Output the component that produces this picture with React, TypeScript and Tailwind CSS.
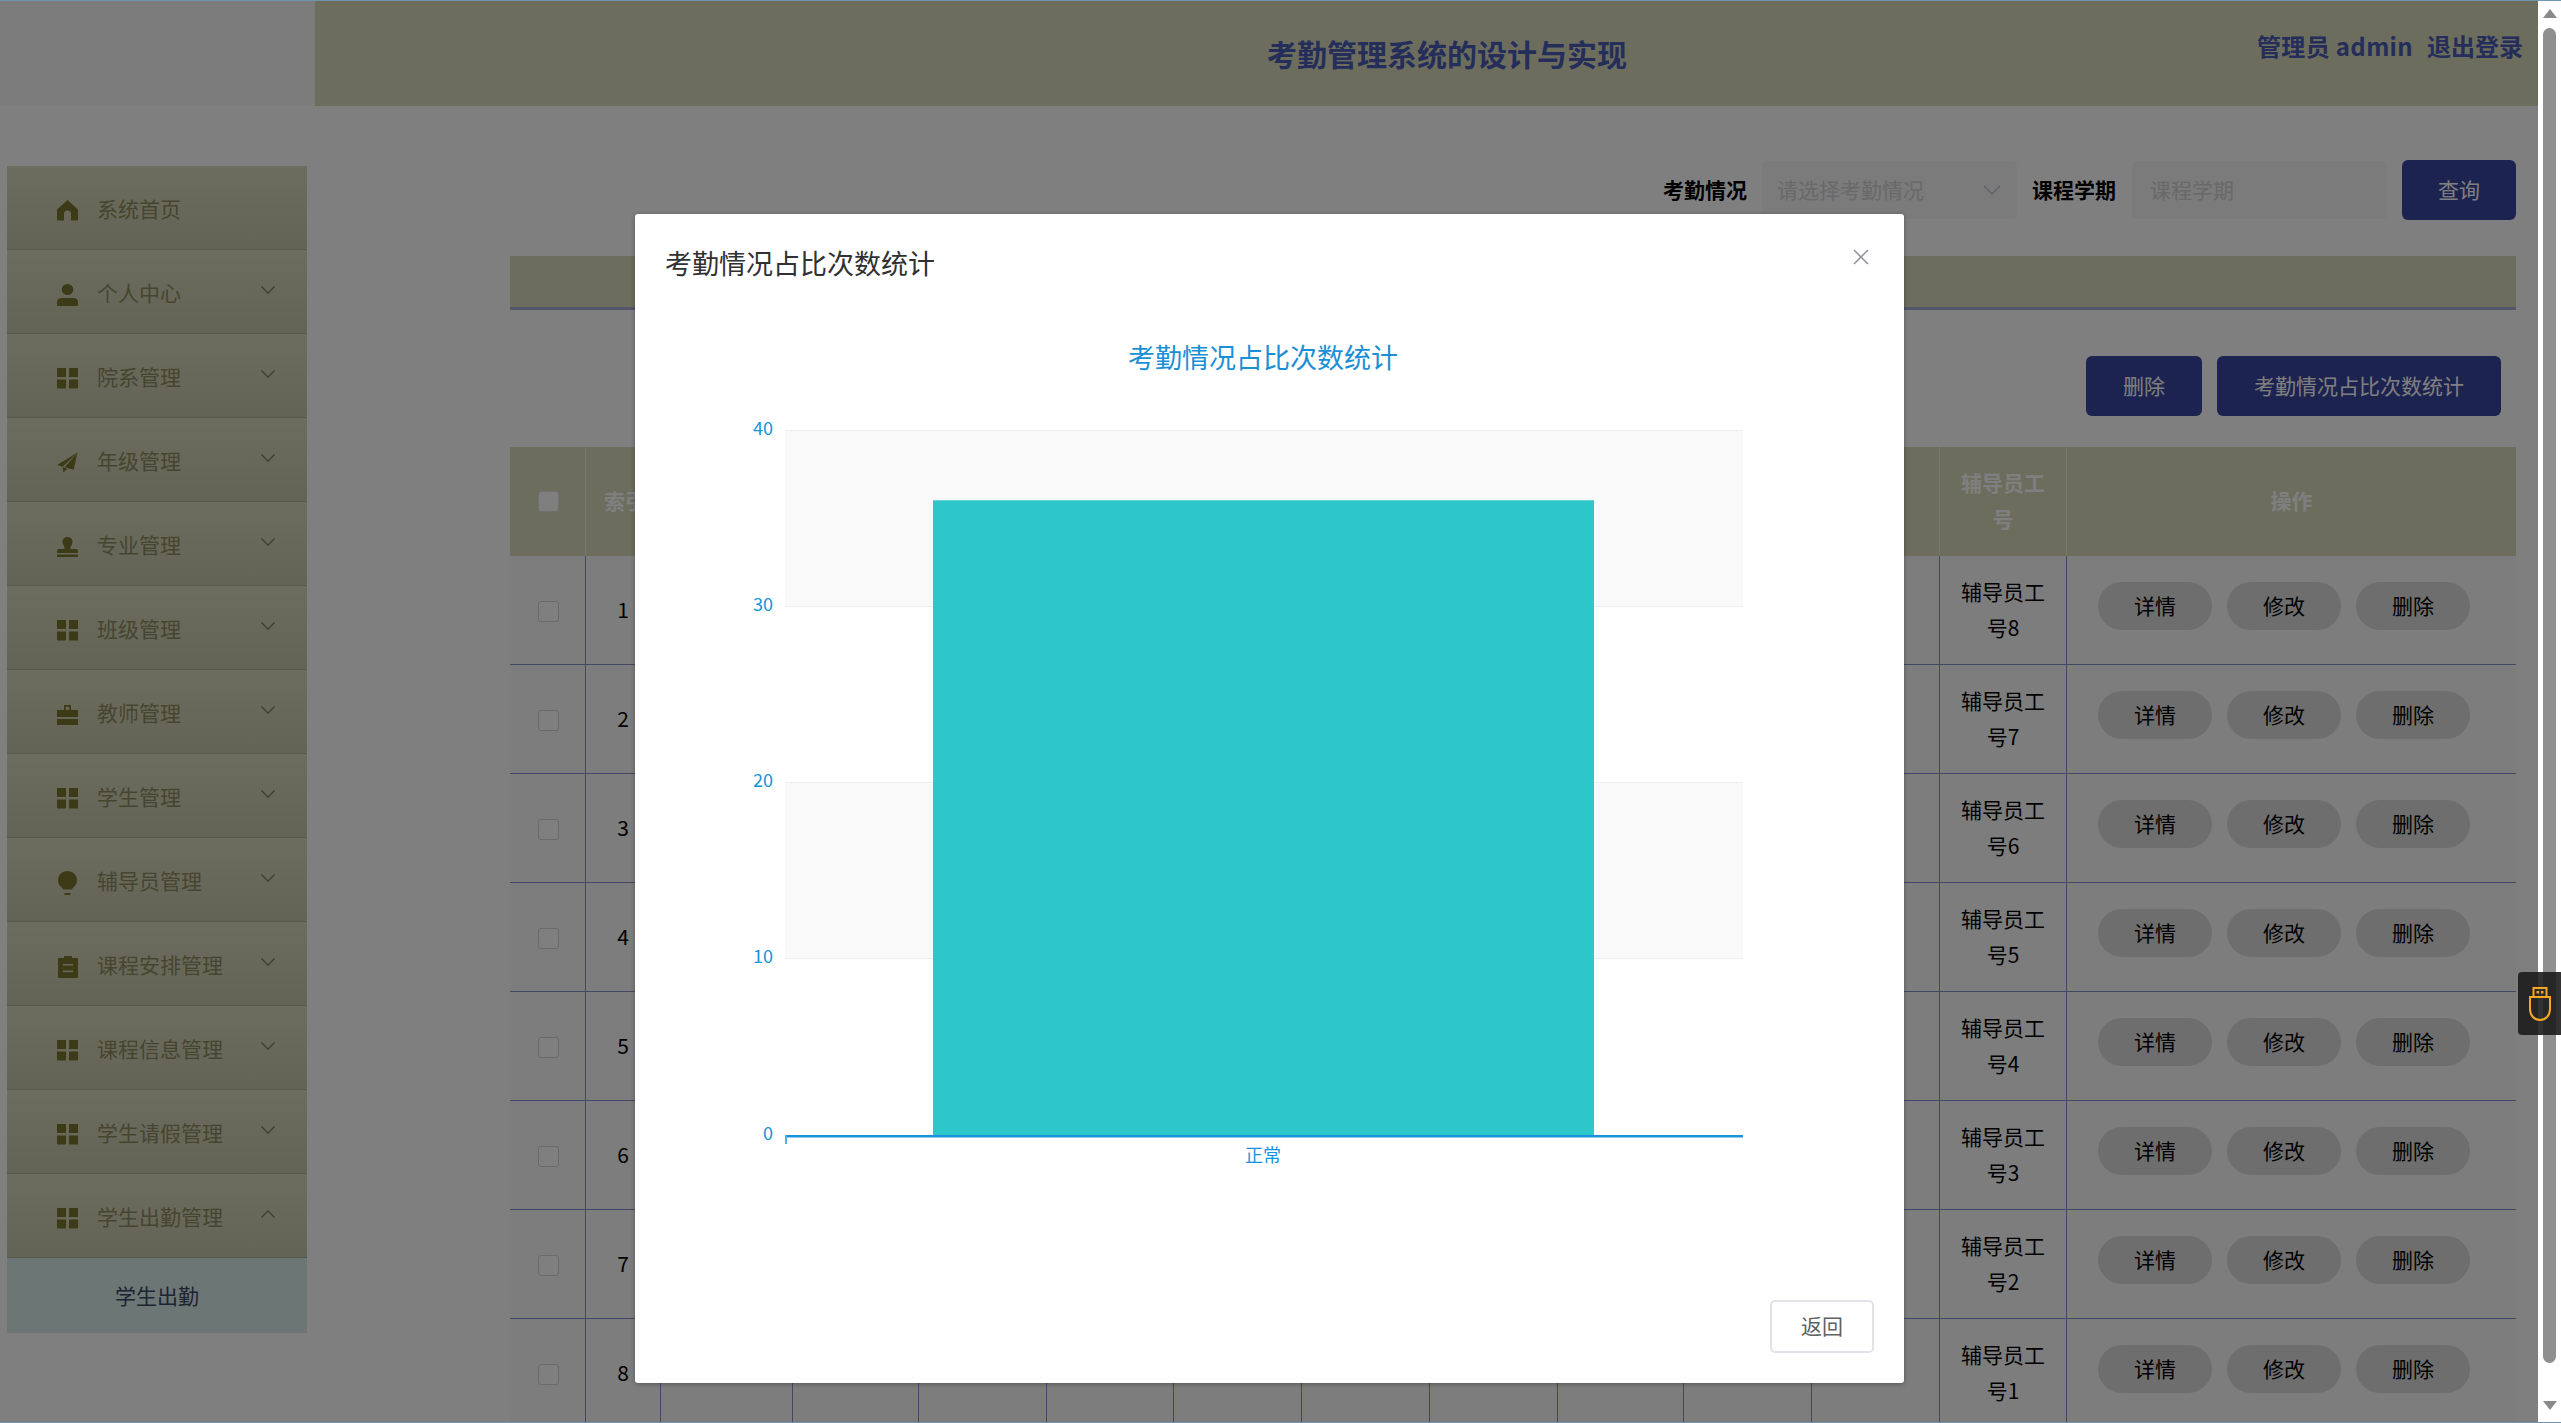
import React from "react";

const F = "#7a762e";

function Grid() {
  return (
    <svg width="21" height="21" viewBox="0 0 21 21" fill={F}>
      <rect x="0" y="0" width="9" height="9" />
      <rect x="12" y="0" width="9" height="9" />
      <rect x="0" y="11.5" width="9" height="9" />
      <rect x="12" y="11.5" width="9" height="9" />
    </svg>
  );
}
function Home() {
  return (
    <svg width="21" height="21" viewBox="0 0 21 21" fill={F}>
      <path d="M10.5 0 L21 9.5 V20.5 H14 V14 Q14 10.5 10.5 10.5 Q7 10.5 7 14 V20.5 H0 V9.5 Z" />
    </svg>
  );
}
function User() {
  return (
    <svg width="21" height="22" viewBox="0 0 21 22" fill={F}>
      <ellipse cx="10.5" cy="5.5" rx="5.8" ry="5.5" />
      <path d="M0 22 V18 Q0 14 5 14 H16 Q21 14 21 18 V22 Z" />
    </svg>
  );
}
function Plane() {
  return (
    <svg width="22" height="21" viewBox="0 0 22 21" fill={F}>
      <path d="M21.5 0 L0 13 L6 15 Z" />
      <path d="M21.5 0 L8 15.5 L17.5 18 Z" />
      <path d="M6 15 L6.5 21 L11 17 L7.5 16 Z" />
    </svg>
  );
}
function Stamp() {
  return (
    <svg width="21" height="20" viewBox="0 0 21 20" fill={F}>
      <path d="M10.5 0 C7 0 5 2.5 5.5 5.5 C6 8.5 8 9.5 7.5 12 H2 Q0 12 0 14 V16 H21 V14 Q21 12 19 12 H13.5 C13 9.5 15 8.5 15.5 5.5 C16 2.5 14 0 10.5 0 Z" />
      <rect x="0" y="17.5" width="21" height="2.5" />
    </svg>
  );
}
function Case() {
  return (
    <svg width="21" height="20" viewBox="0 0 21 20" fill={F}>
      <path d="M7 0 H14 V5 H21 V12 H0 V5 H7 Z M8.8 1.7 V5 H12.2 V1.7 Z" fillRule="evenodd" />
      <rect x="0" y="14" width="21" height="6" />
    </svg>
  );
}
function Bulb() {
  return (
    <svg width="19" height="24" viewBox="0 0 19 24" fill={F}>
      <path d="M9.5 0 C4 0 0 4 0 9.5 C0 13.5 3 16 5.5 18.5 H13.5 C16 16 19 13.5 19 9.5 C19 4 15 0 9.5 0 Z" />
      <rect x="6.5" y="22" width="6" height="2" />
    </svg>
  );
}
function Clip() {
  return (
    <svg width="20" height="22" viewBox="0 0 20 22" fill={F}>
      <path
        d="M6 0 H14 V2 H20 V22 H0 V2 H6 Z M5 8 V9.6 H15 V8 Z M5 14.6 V16.2 H15 V14.6 Z"
        fillRule="evenodd"
      />
    </svg>
  );
}
function Chevron({ up }: { up?: boolean }) {
  return (
    <svg width="14" height="8" viewBox="0 0 14 8" fill="none" stroke="#7c7a50" strokeWidth="1.25">
      <polyline points={up ? "0.5,7.5 7,0.8 13.5,7.5" : "0.5,0.5 7,7.2 13.5,0.5"} />
    </svg>
  );
}

const menu: [string, React.ReactNode, boolean][] = [
  ["系统首页", <Home />, false],
  ["个人中心", <User />, true],
  ["院系管理", <Grid />, true],
  ["年级管理", <Plane />, true],
  ["专业管理", <Stamp />, true],
  ["班级管理", <Grid />, true],
  ["教师管理", <Case />, true],
  ["学生管理", <Grid />, true],
  ["辅导员管理", <Bulb />, true],
  ["课程安排管理", <Clip />, true],
  ["课程信息管理", <Grid />, true],
  ["学生请假管理", <Grid />, true],
  ["学生出勤管理", <Grid />, true],
];

const colWidths = [76, 75, 132, 126, 128, 127, 128, 128, 128, 126, 128, 128, 127, 449];

function Sidebar() {
  return (
    <aside className="ml-[7px] mt-[60px] w-[300px] shrink-0">
      {menu.map(([label, icon, hasArrow], i) => (
        <div
          key={label}
          className="flex h-[84px] items-center border-b border-[#b0b294] bg-gradient-to-b from-[#d8dabd] to-[#c6c8ac] pl-[50px] pr-[32px] pt-[6px] text-[21px] text-[#8e8b5e]"
        >
          <span className="flex w-[21px] shrink-0 justify-center">{icon}</span>
          <span className="mb-[3px] ml-[19px] whitespace-nowrap">{label}</span>
          {hasArrow && (
            <span className="mb-[9px] ml-auto flex">
              <Chevron up={i === 12} />
            </span>
          )}
        </div>
      ))}
      <div className="flex h-[75px] items-center justify-center border-b border-[#e4e4e4] bg-[#d8ece8] pt-[1px] text-[21px] text-[#3e4866]">
        学生出勤
      </div>
    </aside>
  );
}

function Pill({ text }: { text: string }) {
  return (
    <button className="flex h-[48px] w-[114px] items-center justify-center rounded-full bg-[#dcdcdc] pb-[2px] text-[21px] text-black">
      {text}
    </button>
  );
}

function Box({ filled }: { filled?: boolean }) {
  return (
    <span
      className={
        filled
          ? "mx-auto mt-[3px] block h-[21px] w-[21px] translate-x-[1px] rounded-[3px] border border-[#e0e0e0] bg-white"
          : "mx-auto mt-[5px] block h-[21px] w-[21px] translate-x-[1px] rounded-[3px] border border-[#d4d4d4] bg-white"
      }
    />
  );
}

function DataTable() {
  const rows = [1, 2, 3, 4, 5, 6, 7, 8];
  return (
    <table className="w-[2006px] table-fixed border-separate border-spacing-0 text-[21px] leading-[36px]">
      <colgroup>
        {colWidths.map((w, i) => (
          <col key={i} style={{ width: w }} />
        ))}
      </colgroup>
      <thead>
        <tr className="h-[109px] bg-[#d8dabb] text-white">
          {colWidths.map((_, i) => (
            <th key={i} className="border-r border-[#eeeee2] px-[18px] pb-[3px] text-center font-bold last:border-r-0">
              {i === 0 && <Box filled />}
              {i === 1 && <span className="whitespace-nowrap">索引</span>}
              {i === 12 && "辅导员工号"}
              {i === 13 && "操作"}
            </th>
          ))}
        </tr>
      </thead>
      <tbody>
        {rows.map((n) => (
          <tr key={n} className="h-[109px] bg-[#fbfbfb] text-black">
            {colWidths.map((_, i) => (
              <td
                key={i}
                className={
                  i === 13
                    ? "border-b border-[#8a8fd0] pl-[31px] pt-[26px] align-top"
                    : "border-b border-r border-[#8a8fd0] px-[18px] pb-[3px] text-center align-middle"
                }
              >
                {i === 0 && <Box />}
                {i === 1 && n}
                {i === 12 && `辅导员工号${9 - n}`}
                {i === 13 && (
                  <div className="flex gap-[15px]">
                    <Pill text="详情" />
                    <Pill text="修改" />
                    <Pill text="删除" />
                  </div>
                )}
              </td>
            ))}
          </tr>
        ))}
      </tbody>
    </table>
  );
}

function Content() {
  return (
    <main className="ml-[203px] w-[2006px] shrink-0 pt-[54px]">
      <div className="flex h-[60px] items-center justify-end text-[21px]">
        <span className="font-bold text-black">考勤情况</span>
        <div className="ml-[15px] flex h-[58px] w-[255px] items-center justify-between rounded-[5px] bg-[#f6f6f6] pl-[15px] pr-[16px] text-[#d2d2d2]">
          <span>请选择考勤情况</span>
          <svg width="18" height="10" viewBox="0 0 18 10" fill="none" stroke="#c0c4cc" strokeWidth="1.5">
            <polyline points="1,1 9,9 17,1" />
          </svg>
        </div>
        <span className="ml-[15px] font-bold text-black">课程学期</span>
        <div className="ml-[16px] flex h-[58px] w-[255px] items-center rounded-[5px] bg-[#f6f6f6] pl-[18px] text-[#d2d2d2]">
          课程学期
        </div>
        <button className="ml-[15px] h-[60px] w-[114px] rounded-[6px] bg-[#3846a0] text-white">查询</button>
      </div>
      <div className="mt-[36px] h-[54px] border-b-[3px] border-[#a8add8] bg-[#d8dabb]" />
      <div className="mt-[46px] flex h-[60px] justify-end gap-[15px] pr-[15px] text-[21px] text-white">
        <button className="w-[116px] rounded-[6px] bg-[#3846a0]">删除</button>
        <button className="w-[284px] rounded-[6px] bg-[#3846a0]">考勤情况占比次数统计</button>
      </div>
      <div className="mt-[31px]">
        <DataTable />
      </div>
    </main>
  );
}

function Chart() {
  const blue = "#1594dc";
  const ys = [118, 294, 470, 646];
  const labels = [
    ["40", 114.5],
    ["30", 290.5],
    ["20", 466.5],
    ["10", 642.5],
    ["0", 819.5],
  ] as const;
  return (
    <svg width="1269" height="888" viewBox="0 0 1269 888" className="block">
      <text x="628" y="44.5" textAnchor="middle" dominantBaseline="central" fontSize="27" fill="#1b8fd6">
        考勤情况占比次数统计
      </text>
      <rect x="150" y="118" width="958" height="176" fill="#f9f9f9" />
      <rect x="150" y="470" width="958" height="176" fill="#f9f9f9" />
      {ys.map((y) => (
        <line key={y} x1="150" x2="1108" y1={y + 0.5} y2={y + 0.5} stroke="#eeeeee" strokeWidth="1" />
      ))}
      <rect x="298" y="188" width="661" height="635" fill="#2ec7c9" />
      <rect x="298" y="188" width="661" height="1" fill="#62d5d6" />
      <rect x="150" y="823" width="958" height="2" fill="#1a92d8" />
      <rect x="150" y="825" width="958" height="1" fill="#8fcdf0" />
      <rect x="150" y="823" width="2" height="9" fill="#4fb0e6" />
      {labels.map(([t, y]) => (
        <text key={t} x="138" y={y} textAnchor="end" dominantBaseline="central" fontSize="18" fill={blue}>
          {t}
        </text>
      ))}
      <text x="628" y="841.5" textAnchor="middle" dominantBaseline="central" fontSize="18" fill={blue}>
        正常
      </text>
    </svg>
  );
}

function Modal() {
  return (
    <section className="absolute left-[635px] top-[213px] z-20 flex h-[1169px] w-[1269px] flex-col rounded-[3px] bg-white shadow-[0_1px_5px_rgba(0,0,0,0.3)]">
      <header className="flex h-[98px] shrink-0 items-center justify-between pl-[30px] pr-[35px]">
        <h2 className="text-[27px] font-normal text-[#303133]">考勤情况占比次数统计</h2>
        <svg width="16" height="16" viewBox="0 0 16 16" stroke="#909399" strokeWidth="1.5" className="mb-[12px]">
          <line x1="1" y1="1" x2="15" y2="15" />
          <line x1="15" y1="1" x2="1" y2="15" />
        </svg>
      </header>
      <Chart />
      <footer className="mt-auto flex justify-end pb-[30px] pr-[30px]">
        <button className="h-[53px] w-[104px] rounded-[5px] border-2 border-[#e2e3ea] bg-white pb-[1px] text-[21px] text-[#606266]">
          返回
        </button>
      </footer>
    </section>
  );
}

function Scrollbar() {
  return (
    <div className="flex h-full w-[23px] shrink-0 flex-col items-center bg-white">
      <svg width="14" height="27" viewBox="0 0 14 27" fill="#8a8a8a">
        <polygon points="0,17 7,8 14,17" />
      </svg>
      <div className="h-[1335px] w-[13px] rounded-full bg-[#8f8f8f]" />
      <svg width="14" height="27" viewBox="0 0 14 27" fill="#8a8a8a" className="mt-auto">
        <polygon points="0,6 14,6 7,15" />
      </svg>
    </div>
  );
}

export default function App() {
  return (
    <div className="relative flex h-[1423px] w-[2561px] overflow-hidden border-y border-[#6f94ab] bg-white font-['Noto_Sans_CJK_SC','Liberation_Sans',sans-serif]">
      <div className="relative h-full w-[2538px] shrink-0 overflow-hidden bg-white">
        <div className="flex h-[105px]">
          <div className="w-[315px] shrink-0 bg-[#f9f9f9]" />
          <div className="flex flex-1 items-center bg-[#d8dabb] pl-[952px] pr-[15px] text-[#4a5cb4]">
            <h1 className="text-[30px] font-bold">考勤管理系统的设计与实现</h1>
            <div className="mb-[15px] ml-auto flex gap-[14px] text-[24px] font-bold">
              <span className="tracking-[0.35px]">管理员 admin</span>
              <span>退出登录</span>
            </div>
          </div>
        </div>
        <div className="flex">
          <Sidebar />
          <Content />
        </div>
        <div className="absolute inset-0 z-10 bg-black/50" />
        <Modal />
      </div>
      <Scrollbar />
      <div className="absolute right-0 top-[971px] z-30 flex h-[63px] w-[43px] items-center justify-center rounded-l-[4px] bg-[#1c1c1c]/90">
        <svg width="22" height="34" viewBox="0 0 22 34" fill="none" stroke="#f5a623" strokeWidth="2">
          <path d="M1 10 H21 V22 C21 28 17 33 11 33 C5 33 1 28 1 22 Z" />
          <rect x="4.5" y="1" width="13" height="9" />
          <rect x="7.5" y="4" width="2.5" height="2.5" fill="#f5a623" stroke="none" />
          <rect x="12" y="4" width="2.5" height="2.5" fill="#f5a623" stroke="none" />
        </svg>
      </div>
    </div>
  );
}
